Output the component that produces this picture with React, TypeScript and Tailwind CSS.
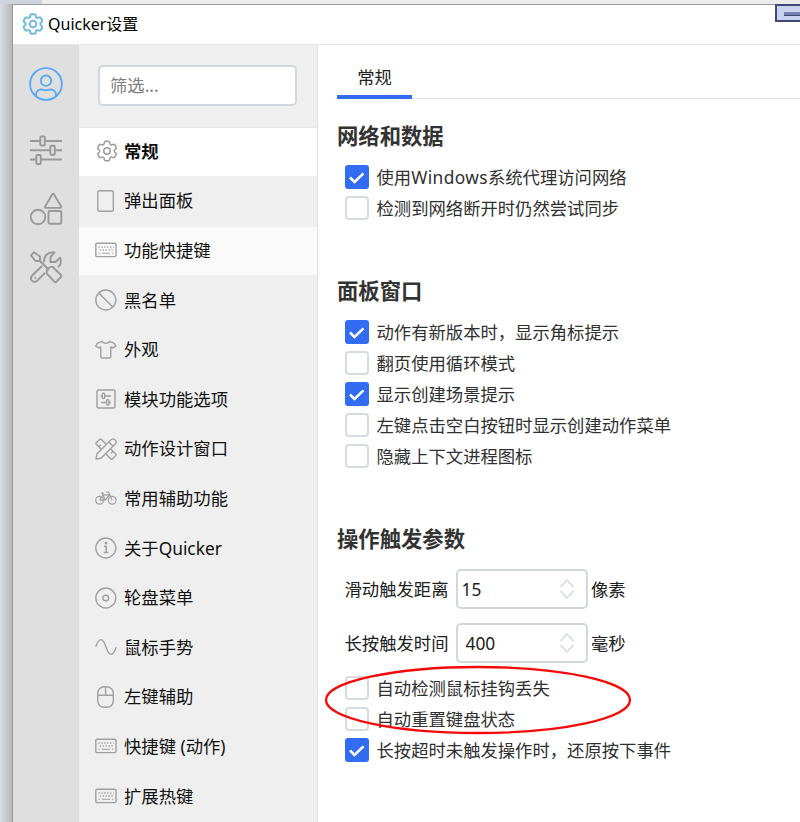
import React, { useState } from "react";
import { HiOutlineCog6Tooth } from "react-icons/hi2";

type IconName =
  | "cog" | "panel" | "keyboard" | "ban" | "shirt" | "module" | "design"
  | "bike" | "info" | "disc" | "wave" | "mouse";

function NavIcon({ name }: { name: IconName }) {
  if (name === "cog") return <HiOutlineCog6Tooth size={26} strokeWidth={1.4} className="-mr-[3px] -ml-px shrink-0 text-[#9c9c9c]" />;
  const shapes: Record<Exclude<IconName, "cog">, React.ReactNode> = {
    panel: <rect x="2.8" y="0.8" width="15.5" height="20.5" rx="1.6" />,
    keyboard: (
      <>
        <rect x="0.8" y="4.2" width="20.2" height="13.4" rx="1.4" />
        <path d="M3.5 8h15M4.8 11h13" strokeDasharray="1.3 1.6" />
        <path d="M3.5 14.2h1.3M7 14.2h8M17 14.2h1.3" strokeWidth="1.1" />
      </>
    ),
    ban: <><circle cx="10.8" cy="11" r="10" /><path d="M3.800 4l14 14" /></>,
    shirt: <path d="M7 2.300C8 4.900 13.600 4.900 14.600 2.300L18.300 3.900c1.200.6 1.900 1.600 2.500 3.200l-2.800 1.700-2.200-.8v10a1 1 0 0 1-1 1H6.800a1 1 0 0 1-1-1v-10l-2.200.8L.8 7.100c.6-1.600 1.300-2.600 2.500-3.200z" />,
    module: (
      <>
        <rect x="2" y="2" width="18" height="18" rx="1.4" />
        <path d="M5.500 8h2M10 8h6M6 14.500h5M14.300 14.500h1.700" />
        <rect x="7.300" y="5.300" width="2.400" height="5.200" rx="1" />
        <rect x="11.600" y="11.800" width="2.400" height="5.200" rx="1" />
      </>
    ),
    design: (
      <>
        <path d="M1 21l.8-5L16.300 1.600a2.200 2.200 0 0 1 3.200 0l1 1a2.200 2.200 0 0 1 0 3.200L6 20.200zM13.800 4l4.200 4.200" />
        <path d="M6.300 11.200L1.300 6.200a1 1 0 0 1 0-1.400L4.800 1.300a1 1 0 0 1 1.400 0L11.200 6.300M4 8.800l2-2" />
        <path d="M15.800 11l5 5a1 1 0 0 1 0 1.400l-3.500 3.500a1 1 0 0 1-1.400 0L11 16M16 15.500l2-2" />
      </>
    ),
    bike: (
      <g strokeWidth="1.200">
        <circle cx="4.600" cy="13.200" r="3.900" /><circle cx="17.200" cy="13.200" r="3.900" />
        <path d="M4.600 13.200l3.300-5.400h6.500L10.300 13.200H4.600M7.300 6.200l3 7M5.800 6h3.200M17.200 13.200L13.500 5H11" />
      </g>
    ),
    info: (
      <>
        <circle cx="10.800" cy="11" r="10" />
        <path d="M9 9.300h2.200v6M8.700 15.500h4.800" strokeWidth="1.500" />
        <circle cx="11" cy="6" r=".8" fill="currentColor" />
      </>
    ),
    disc: <><circle cx="10.800" cy="11" r="10" /><circle cx="10.800" cy="11" r="2.800" /></>,
    wave: <path d="M.8 10.800C4.100 1.200 7.700 1.200 11 11s6.800 9.800 10.100.2" />,
    mouse: <><rect x="2.800" y="0.800" width="15.500" height="20.500" rx="6.400" /><path d="M2.800 9.300h15.500M10.600 1v8.300" /></>,
  };
  return (
    <svg viewBox="0 0 22 22" width="22" height="22" fill="none" stroke="currentColor" strokeWidth="1.4" strokeLinejoin="round" className="shrink-0 text-[#a0a0a0]">
      {shapes[name]}
    </svg>
  );
}

const navItems: { icon: IconName; label: string }[] = [
  { icon: "cog", label: "常规" },
  { icon: "panel", label: "弹出面板" },
  { icon: "keyboard", label: "功能快捷键" },
  { icon: "ban", label: "黑名单" },
  { icon: "shirt", label: "外观" },
  { icon: "module", label: "模块功能选项" },
  { icon: "design", label: "动作设计窗口" },
  { icon: "bike", label: "常用辅助功能" },
  { icon: "info", label: "关于Quicker" },
  { icon: "disc", label: "轮盘菜单" },
  { icon: "wave", label: "鼠标手势" },
  { icon: "mouse", label: "左键辅助" },
  { icon: "keyboard", label: "快捷键 (动作)" },
  { icon: "keyboard", label: "扩展热键" },
];

function Rail() {
  return (
    <nav className="flex w-[66px] shrink-0 flex-col items-center bg-[#dfdfdf] text-[#999999]">
      <svg viewBox="0 0 34 34" className="mt-[22px] size-[34px] text-[#5aa9f8]" fill="none" stroke="currentColor" strokeWidth="1.9">
        <circle cx="17" cy="17" r="15.9" />
        <circle cx="17" cy="13.700" r="5.200" />
        <path d="M7 29.200V28c0-3.500 2.300-5.500 5.200-5.500 1.900 0 2.800.8 4.800.8s2.900-.8 4.800-.8c2.900 0 5.200 2 5.200 5.500v1.200" />
      </svg>
      <svg viewBox="0 0 34 34" className="mt-8 size-[34px]" fill="none" stroke="currentColor" strokeWidth="1.9">
        <path d="M1 8h10M16 8h17M1 17.200h20M26 17.200h7M1 26.500h6M12 26.500h21" />
        <rect x="11.300" y="3.500" width="4.500" height="9" rx="1" />
        <rect x="21.300" y="12.700" width="4.500" height="9" rx="1" />
        <rect x="7.300" y="22" width="4.500" height="9" rx="1" />
      </svg>
      <svg viewBox="0 0 34 34" className="mt-[25px] size-[34px]" fill="none" stroke="currentColor" strokeWidth="1.9" strokeLinejoin="round">
        <path d="M23.300 2.200q.8-1.200 1.600 0l7.300 12.200q.5 1.300-.8 1.500H16.800q-1.300-.2-.7-1.500z" />
        <circle cx="9" cy="25" r="7.300" />
        <rect x="19.500" y="19" width="12.800" height="12.800" rx="1.200" />
      </svg>
      <svg viewBox="-1 -1 34 34" className="mt-[24px] size-[34px]" fill="none" stroke="currentColor" strokeWidth="1.9" strokeLinecap="round" strokeLinejoin="round">
        <path d="M1 4.500L4 1.200l6 4.300V10H5.500zM10 10l8.500 8.500" />
        <path d="M16.800 22.500c-1-3.500 2-7.300 6-6.500l8.200 8q1 1 0 2l-4.500 4.700q-1.200.9-2.200 0z" />
        <path d="M14 10.500c0-5.500 4-10 10.500-9l-4 4.500v5h5l4.500-4.300c2 4.300.5 7-1.500 9" />
        <path d="M11.500 15.500L2 24.800c-3 3.500 1.500 8 5 5l7.500-7.500M5.300 26.800v.1" />
      </svg>
    </nav>
  );
}

function Check({ label, initial = false }: { label: React.ReactNode; initial?: boolean }) {
  const [on, setOn] = useState(initial);
  return (
    <button type="button" role="checkbox" aria-checked={on} onClick={() => setOn(!on)} className="flex h-[31px] items-center gap-2 pl-[7.500px] text-left whitespace-nowrap text-[#303030]">
      <span className={on ? "mb-px flex size-6 items-center justify-center rounded-[3px] bg-[#326cf3]" : "mb-px size-6 rounded-[4px] border-2 border-[#d6dbe0] bg-white"}>
        {on && (
          <svg viewBox="0 0 24 24" className="size-6" fill="none" stroke="white" strokeWidth="2.500">
            <path d="M5 12.500l4.500 4.500L18.500 8.300" />
          </svg>
        )}
      </span>
      <span className="pb-0.5">{label}</span>
    </button>
  );
}

function NumberField({ label, value, unit, inset }: { label: string; value: string; unit: string; inset: string }) {
  return (
    <div className="flex h-10 items-center pl-[7.500px] whitespace-nowrap text-[#202020]">
      <span className="w-[111px] pb-px">{label}</span>
      <div className={`flex h-10 w-[132.500px] items-center justify-between rounded-[5px] border-2 border-[#d2d7dd] pr-[11px] ${inset}`}>
        <span className="pb-px">{value}</span>
        <svg viewBox="0 0 16 22" className="h-[22px] w-4" fill="none" stroke="#d2d7dd" strokeWidth="1.500">
          <path d="M1.500 9L8 2l6.500 7M1.500 13L8 20l6.500-7" />
        </svg>
      </div>
      <span className="ml-[3px] pb-px">{unit}</span>
    </div>
  );
}

function Heading({ children }: { children: string }) {
  return <h2 className="mb-2.5 h-8 text-[21.330px] leading-8 font-bold text-[#333]">{children}</h2>;
}

export default function App() {
  return (
    <div className="relative flex h-[822px] w-[800px] flex-col overflow-hidden bg-[#ececec] font-['Noto_Sans','Noto_Sans_CJK_SC',sans-serif] text-[17.330px] leading-6">
      <div className="flex h-1 shrink-0">
        <div className="w-[42px] bg-[#cfd4dc]" />
      </div>
      <div className="flex min-h-0 flex-1">
        <div className="w-3 shrink-0 bg-linear-to-r from-[#dadee4] to-[#b5b9be]" />
        <div className="flex min-w-0 flex-1 flex-col border-t border-l border-[#999] bg-white">
          <header className="flex h-10 shrink-0 items-center border-b border-[#e6e6e6] pb-px pl-[7px]">
            <HiOutlineCog6Tooth size={26} strokeWidth={1.900} className="text-[#72bce0]" />
            <span className="ml-0.5 pb-px text-[16px] text-black">Quicker设置</span>
          </header>
          <div className="flex min-h-0 flex-1">
            <Rail />
            <aside className="flex w-[239px] shrink-0 flex-col border-r border-[#e2e2e2] bg-[#efefef]">
              <div className="h-[83px] shrink-0 border-b border-[#e8e8e8] px-[19px] pt-5">
                <input placeholder="筛选..." className="block h-[41px] w-[199px] rounded-[5px] border-2 border-[#d2d7dd] bg-white px-2.5 pb-0.5 placeholder:text-[#808080]" />
              </div>
              <div className="flex flex-col gap-[2px]">
                {navItems.map((item, i) => (
                  <button key={item.label} type="button" className={`flex h-[47.600px] shrink-0 items-center gap-[7px] pb-px pl-4 whitespace-nowrap text-[#111] ${i === 0 ? "bg-white font-bold" : i === 2 ? "bg-[#fafafa]" : ""}`}>
                    <NavIcon name={item.icon} />
                    <span className="pb-px">{item.label}</span>
                  </button>
                ))}
              </div>
            </aside>
            <main className="min-w-0 flex-1 pl-[19px]">
              <div className="flex h-[54px] items-end border-b border-[#e6e6e6]">
                <button type="button" className="-mb-px flex h-[46px] w-[75px] items-start justify-center border-b-4 border-[#326cf3] pt-3 text-[#222]">常规</button>
              </div>
              <section className="mt-[21px]">
                <Heading>网络和数据</Heading>
                <Check label={<>使用<span className="tracking-[0.4px]">Windows</span>系统代理访问网络</>} initial />
                <Check label="检测到网络断开时仍然尝试同步" />
              </section>
              <section className="mt-[51px]">
                <Heading>面板窗口</Heading>
                <Check label="动作有新版本时，显示角标提示" initial />
                <Check label="翻页使用循环模式" />
                <Check label="显示创建场景提示" initial />
                <Check label="左键点击空白按钮时显示创建动作菜单" />
                <Check label="隐藏上下文进程图标" />
              </section>
              <section className="mt-[51px]">
                <Heading>操作触发参数</Heading>
                <div className="mt-3.5 mb-2.5 flex flex-col gap-3.5">
                  <NumberField label="滑动触发距离" value="15" unit="像素" inset="pl-1" />
                  <NumberField label="长按触发时间" value="400" unit="毫秒" inset="pl-2" />
                </div>
                <Check label="自动检测鼠标挂钩丢失" />
                <Check label="自动重置键盘状态" />
                <Check label="长按超时未触发操作时，还原按下事件" initial />
              </section>
            </main>
          </div>
        </div>
      </div>
      <div className="absolute top-1 left-[775px] h-[18px] w-[30px] border-2 border-[#414878] bg-[#c9d3f0] pt-1.5 pl-[7px]">
        <div className="h-1 w-5 border-b border-[#414878] bg-[#7480ae]" />
      </div>
      <svg viewBox="0 0 308 72" className="pointer-events-none absolute top-[664px] left-[324px] h-[72px] w-[308px]" fill="none" stroke="#f50808" strokeWidth="2.300">
        <ellipse cx="154" cy="36" rx="152" ry="33" />
      </svg>
    </div>
  );
}
